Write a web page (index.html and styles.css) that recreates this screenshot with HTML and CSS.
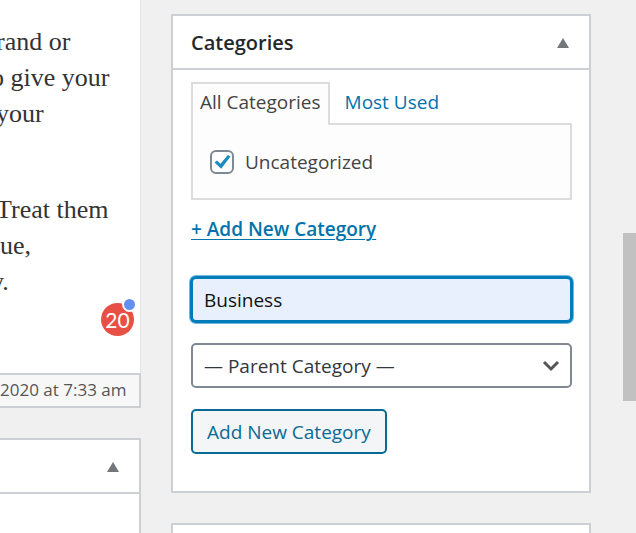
FILE: index.html
```html
<!DOCTYPE html>
<html lang="en">
<head>
<meta charset="utf-8">
<title>Edit Post</title>
<link rel="stylesheet" href="styles.css">
</head>
<body>
<main class="editor">
  <div class="content">
    <article class="post">
      <div class="copy">
        <p><span class="line cut">rand or</span><span class="line cut-wide">o give your</span><span class="line cut">your</span></p>
        <p><span class="line cut">Treat them</span><span class="line">ue,</span><span class="line cut-wide">y.</span></p>
        <button class="badge" type="button" aria-label="20 suggestions">20<span class="dot"></span></button>
      </div>
      <footer class="status">2020 at 7:33 am</footer>
    </article>
    <section class="box">
      <header class="box-head"><button class="toggle" type="button" aria-label="Toggle panel"><svg viewBox="0 0 12 10"><path d="M0 10 6 0l6 10z"/></svg></button></header>
    </section>
  </div>
  <aside class="side">
    <section class="box">
      <header class="box-head">
        <h2>Categories</h2>
        <button class="toggle" type="button" aria-label="Toggle panel"><svg viewBox="0 0 12 10"><path d="M0 10 6 0l6 10z"/></svg></button>
      </header>
      <form class="box-body">
        <nav class="tabs">
          <a class="tab current" href="#all">All Categories</a>
          <a class="tab" href="#used">Most Used</a>
        </nav>
        <div class="panel" id="all">
          <label class="check">
            <span class="tick"><input type="checkbox" checked><svg viewBox="0 0 24 24"><path d="M4.500 12.600 7 10.600 10.500 13.800 17.800 5 20.500 6.500 11.200 18.800z"/></svg></span>
            Uncategorized
          </label>
        </div>
        <a class="add-link" href="#new">+ Add New Category</a>
        <input class="field name" id="new" type="text" value="Business" aria-label="New category name">
        <select class="field parent" aria-label="Parent category"><option>— Parent Category —</option></select>
        <button class="add" type="button">Add New Category</button>
      </form>
    </section>
    <section class="box"><header class="box-head"></header></section>
  </aside>
  <div class="scroll"><div class="thumb"></div></div>
</main>
</body>
</html>
```
FILE: styles.css
```css
* { box-sizing: border-box; }
body {
  margin: 0;
  background: #f0f0f0;
  color: #444;
  font: 19px/24px "Open Sans", "Noto Sans", sans-serif;
}
button, input, select { font: inherit; margin: 0; }
.editor {
  display: grid;
  grid-template-columns: 141px minmax(0, 1fr) 13px;
  column-gap: 30px;
  height: 100vh;
  overflow: hidden;
}
.content, .side { display: flex; flex-direction: column; gap: 30px; min-width: 0; }
.side { padding: 14px 2px 0 0; }
.post { display: flex; flex-direction: column; }
.copy {
  position: relative;
  height: 373px;
  padding-top: 24px;
  overflow: hidden;
  background: #fff;
  border-right: 1px solid #e2e4e7;
  color: #333;
  font: 26px/36px "Liberation Serif", serif;
}
.copy p { margin: 0 0 60px; }
.line { display: block; white-space: nowrap; }
.cut { margin-left: -4px; }
.cut-wide { margin-left: -9px; }
.badge {
  position: absolute;
  right: 6px;
  bottom: 37px;
  width: 33px;
  height: 33px;
  padding: 0;
  border: 0;
  border-radius: 50%;
  background: #e85045;
  color: #fff;
  font: 21px/34px Lato, sans-serif;
}
.dot {
  position: absolute;
  top: -6px;
  right: -3px;
  width: 15px;
  height: 15px;
  border: 2px solid #fff;
  border-radius: 50%;
  background: #628ff0;
}
.status {
  padding: 3px 14px 4px 0;
  border: 2px solid #ccd0d4;
  border-left: 0;
  background: #f7f7f7;
  color: #555;
  font-size: 17px;
  text-align: right;
  white-space: nowrap;
}
.box { background: #fff; border: 2px solid #ccd0d4; }
.content .box { flex: 1; border-left: 0; }
.box-head {
  display: flex;
  align-items: center;
  height: 54px;
  padding: 2px 20px 0 18px;
  border-bottom: 2px solid #ccd0d4;
}
h2 { margin: 0; color: #23282d; font-size: 20px; font-weight: 600; }
.toggle {
  margin-left: auto;
  padding: 0;
  border: 0;
  background: none;
  line-height: 0;
}
.toggle svg { width: 12px; height: 10px; fill: #72777c; }
.box-body { padding: 12px 17px 37px 18px; }
.tabs { display: flex; }
.tab {
  padding: 6px 13px 9px;
  border: 2px solid transparent;
  border-bottom: 0;
  color: #0073aa;
  text-decoration: none;
  white-space: nowrap;
}
.current {
  position: relative;
  margin-bottom: -2px;
  padding: 6px 7px 11px;
  border-color: #dcdcde;
  background: #fdfdfd;
  color: #444;
}
.panel {
  padding: 25px 17px 24px;
  border: 2px solid #dcdcde;
  background: #fdfdfd;
}
.check { display: flex; align-items: center; gap: 11px; line-height: 24px; }
.tick { position: relative; width: 24px; height: 24px; }
.tick input {
  display: block;
  width: 24px;
  height: 24px;
  appearance: none;
  border: 2px solid #7e8993;
  border-radius: 6px;
  background: #fff;
}
.tick svg { position: absolute; inset: 0; fill: #1e8cbe; pointer-events: none; }
.add-link {
  display: block;
  width: max-content;
  margin: 17px 0 36px;
  color: #0073aa;
  font-weight: 600;
  text-underline-offset: 3px;
}
.field {
  display: block;
  width: 100%;
  height: 45px;
  padding: 0 11px;
  border: 2px solid #7e8993;
  border-radius: 5px;
  background: #fff;
  color: #32373c;
}
.name {
  border-color: #007cba;
  background: #e8f0fe;
  color: #111;
  box-shadow: 0 0 0 1px #007cba, 0 0 0 2px #72b8dc;
  outline: 0;
}
.parent {
  appearance: none;
  margin: 21px 0;
  background: #fff url("data:image/svg+xml,%3Csvg xmlns='http://www.w3.org/2000/svg' viewBox='0 0 18 12'%3E%3Cpath d='M2 2l7 7 7-7' fill='none' stroke='%23555' stroke-width='3'/%3E%3C/svg%3E") no-repeat right 10px center / 18px 12px;
}
.add {
  height: 45px;
  padding: 0 14px;
  border: 2px solid #0a6a94;
  border-radius: 5px;
  background: #f3f5f6;
  color: #0a6a94;
}
.scroll { padding-top: 233px; }
.thumb { height: 168px; background: #c1c1c1; }
```
